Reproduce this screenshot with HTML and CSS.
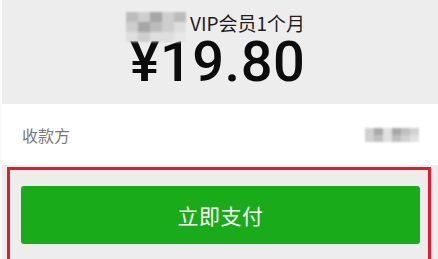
FILE: index.html
```html
<!DOCTYPE html>
<html lang="zh-CN">
<head>
<meta charset="utf-8">
<link rel="stylesheet" href="styles.css">
</head>
<body>
<div class="page">
  <section class="summary">
    <div class="title">
      <span class="mosaic mosaic-lg">
        <i class="m2"></i><i class="m3"></i><i class="m1"></i><i class="m3"></i><i class="m2"></i>
        <i class="m3"></i><i class="m1"></i><i class="m2"></i><i class="m3"></i><i class="m4"></i>
        <i class="m4"></i><i class="m3"></i><i class="m4"></i><i class="m4"></i><i class="m5"></i>
      </span>
      <span class="title-text">VIP会员1个月</span>
    </div>
    <div class="price">¥19.80</div>
  </section>
  <section class="payee">
    <span class="payee-label">收款方</span>
    <span class="mosaic mosaic-sm">
      <i class="m3"></i><i class="m1"></i><i class="m4"></i><i class="m1"></i><i class="m2"></i><i class="m3"></i>
      <i class="m3"></i><i class="m2"></i><i class="m4"></i><i class="m2"></i><i class="m3"></i><i class="m4"></i>
    </span>
  </section>
  <section class="actions">
    <button class="pay-btn">立即支付</button>
    <div class="highlight"></div>
  </section>
</div>
</body>
</html>
```
FILE: styles.css
```css
html, body {
  margin: 0;
  padding: 0;
  background: #fbfbfb;
  font-family: "Noto Sans CJK SC", "Noto Sans", sans-serif;
}
.page {
  margin-left: 2px;
  width: 436px;
  height: 259px;
  overflow: hidden;
  position: relative;
}
.summary {
  height: 104px;
  background: #ededed;
  display: flex;
  flex-direction: column;
  align-items: center;
  box-sizing: border-box;
  padding-top: 12px;
  padding-right: 9px;
}
.title {
  display: flex;
  align-items: flex-start;
  gap: 4px;
  height: 26px;
}
.title-text {
  font-size: 19px;
  line-height: 21px;
  color: #1e1e1e;
}
.mosaic {
  display: grid;
  filter: blur(0.8px);
  opacity: 0.85;
}
.mosaic i { display: block; }
.mosaic-lg {
  grid-template-columns: repeat(5, 12px);
  grid-template-rows: repeat(3, 10px);
  width: 60px;
  height: 30px;
}
.mosaic-sm {
  grid-template-columns: repeat(6, 9px);
  grid-template-rows: repeat(2, 7px);
  width: 54px;
  height: 14px;
}
.m1 { background: #9a9a9a; }
.m2 { background: #b4b4b4; }
.m3 { background: #c9c9c9; }
.m4 { background: #dcdcdc; }
.m5 { background: #e6e6e6; }
.price {
  font-size: 56px;
  line-height: 48px;
  font-weight: 500;
  color: #0c0c0c;
  letter-spacing: 0.5px;
  font-family: "Roboto", "Noto Sans CJK SC", sans-serif;
  margin-left: 4px;
}
.payee {
  height: 61px;
  background: #fff;
  display: flex;
  align-items: center;
  justify-content: space-between;
  padding: 0 19px 0 20px;
  box-sizing: border-box;
}
.payee-label {
  font-size: 16px;
  color: #777;
}
.actions {
  background: #ededed;
  padding: 21px 16px 0 19px;
  height: 94px;
  box-sizing: border-box;
}
.pay-btn {
  display: block;
  width: 399px;
  height: 58px;
  border: none;
  border-radius: 3px;
  background: #1aab1b;
  color: #fff;
  font-family: "Noto Sans CJK SC", sans-serif;
  font-size: 21px;
  letter-spacing: 0.5px;
  padding: 0;
}
.highlight {
  position: absolute;
  left: 5px;
  top: 167px;
  width: 418px;
  height: 120px;
  border: 3px solid #e8192c;
}
```
